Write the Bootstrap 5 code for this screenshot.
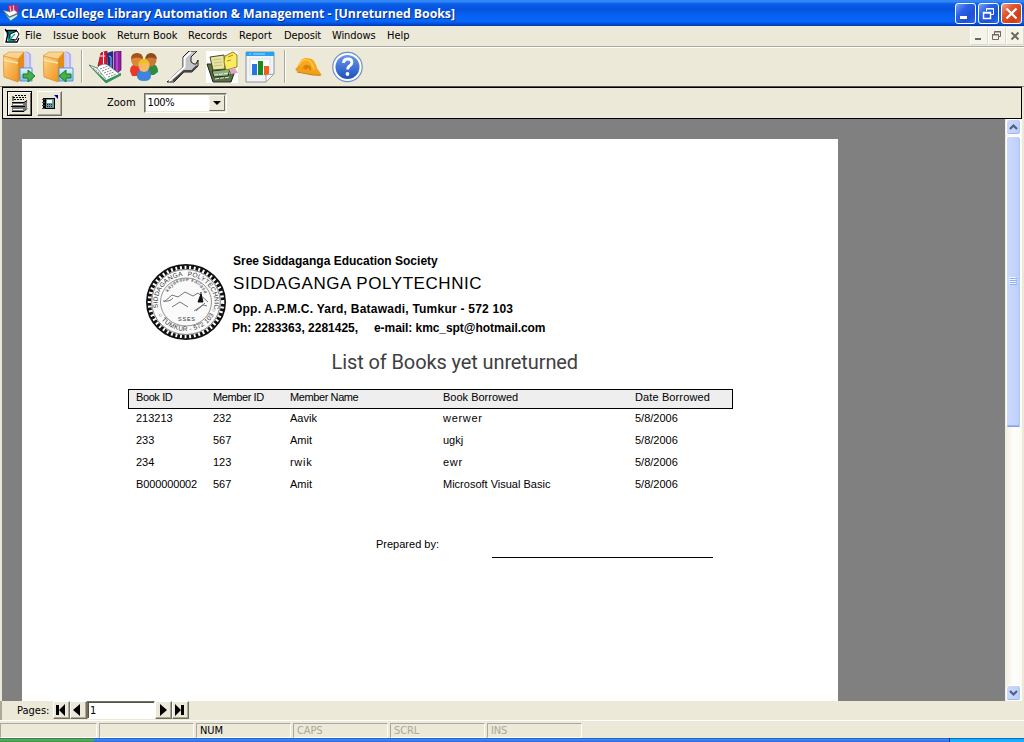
<!DOCTYPE html>
<html lang="en">
<head>
<meta charset="utf-8">
<meta name="viewport" content="width=device-width, initial-scale=1">
<title>CLAM-College Library Automation &amp; Management</title>
<link href="https://cdn.jsdelivr.net/npm/bootstrap@5.3.0/dist/css/bootstrap.min.css" rel="stylesheet">
<style>
:root{--face:#ece9d8;--shade:#aca899}
body{width:1024px;height:742px;overflow:hidden;background:var(--face);color:#000;font:11px/14px "DejaVu Sans Condensed","DejaVu Sans",sans-serif;white-space:nowrap}
body>div{flex:none}
svg{display:block;flex:none}
.titlebar{height:26px;padding:0 2px 0 3px;background:linear-gradient(#2a80f5 0,#3a8ef8 1px,#0a5ee8 4px,#0553df 9px,#0560f0 15px,#0668fc 21px,#0558e4 23px,#0136ac 26px)}
.title-text{font:bold 12.3px/16px "Open Sans",sans-serif;color:#fff;text-shadow:1px 1px 0 #0a2a80;margin:1px 0 0 2px;letter-spacing:-.03px}
.win-btns{gap:2px}
.win-btn{width:21px;height:21px;border:1px solid #fff;border-radius:3px;background:linear-gradient(135deg,#7ba2f4,#2a62e4 35%,#1c50d8 70%,#2e6cf0)}
.win-close{background:linear-gradient(135deg,#f0a088,#e2552e 35%,#d03c14 75%,#e2602f)}
.menubar{height:21px;padding-left:4px;border-bottom:1px solid var(--shade)}
.menu{grid-template-columns:28px 64px 71px 51px 45px 48px 55px 30px;margin-left:4px}
.menu a{color:#000;text-decoration:none;line-height:14px}
.tight{letter-spacing:-.1px}
.mdi-btn{width:18px;height:18px;background:#f5f4ea;border:1px solid #fff;border-right-color:#dedbca;border-bottom-color:#dedbca}
.toolbar{height:40px;border-top:1px solid #fff;border-bottom:1px solid #8c887a;padding:0 0 1px 3px}
.sep{width:2px;height:33px;border-left:1px solid var(--shade);border-right:1px solid #fff;margin:0 6px 0 5px}
.sep-wide{margin:0 9px 0 8px}
.g6{margin-left:6px}.g7{margin-left:7px}.g8{margin-left:8px}
.viewbar{height:32px;margin:0 2px;border:1px solid #000;box-shadow:0 -1px #55534a;padding-left:4px}
.tool{width:25px;height:25px;background:var(--face);border:1px solid;border-color:#fff #716f64 #716f64 #fff;box-shadow:inset -1px -1px var(--shade)}
.tool-on{border:1px solid #000;box-shadow:inset 1px 1px #fff,inset -1px -1px #716f64;margin-right:5px}
.combo{width:83px;height:20px;background:#fff;border:1px solid;border-color:#716f64 #fff #fff #716f64;box-shadow:inset 1px 1px #aca899,inset -1px -1px var(--face);padding:0 1px 0 3px;margin-left:8px}
.combo-btn{width:16px;height:16px;background:var(--face);border:1px solid;border-color:#f6f5ee #716f64 #716f64 #f6f5ee}
.desk{height:582px;background:#808080;margin:0 2px}
.report{width:816px;height:562px;margin:20px 0 0 20px;background:#fff;font-family:"Liberation Sans",Arial,sans-serif;padding:0 105px 0 106px}
.masthead{padding:115px 0 0 18px;height:204px}
.masthead b{display:block;font-size:12px;line-height:14px}
.l2{font-size:17px;line-height:20px;letter-spacing:.56px;margin-top:6px}
.l3{letter-spacing:.23px;margin-top:8px}
.l4{margin:5px 0 0 -1px}
.report-title{font:20px/24px Roboto,sans-serif;letter-spacing:-.11px;color:#404040;margin:7px 0 0 203.600px}
.grid-head{height:20px;margin-top:15px;border:1px solid #000;background:#eee;padding:0 0 5px 7px}
.line{display:grid;grid-template-columns:77px 77px 153px 192px 1fr;align-items:center}
.grid-row{height:22px;padding-left:8px;padding-bottom:4px}
.nm{letter-spacing:-.4px}.dt{letter-spacing:.12px}.bk{letter-spacing:-.13px}.wide{letter-spacing:.7px}
.sign{margin-top:38px;padding-left:248px;height:23px}
.rule{width:221px;border-bottom:1px solid #000;margin-right:20px}
.scroll{width:17px;height:582px;margin-right:-1px;padding-right:1px;background:linear-gradient(90deg,#eeeddf,#fefefb 50%,#fbfaf2)}
.desk .scroll{margin-right:0}
.sbtn,.thumb{width:15px;border:1px solid #fff;border-radius:3px;box-shadow:inset 0 -1px #9cb8f4,inset -1px 0 #b0c6f8;background:linear-gradient(90deg,#cbd9fe,#c4d3fb 65%,#b6ccfb)}
.sbtn{height:16px}.thumb{height:291px;margin-top:1px;border-bottom-color:#7f9fe0}
.pages{height:19px;border-left:2px solid var(--shade);padding-left:15px}
.pages>span:first-child{width:36px;line-height:19px}
.pbtn{width:17px;height:18px;border:1px solid;border-color:#fff #716f64 #716f64 #fff;box-shadow:inset -1px -1px var(--shade)}
.pbox{width:68px;height:18px;background:#fff;border:1px solid;border-color:#716f64 #fff #fff #716f64;box-shadow:inset 1px 1px #55534a;padding-left:2px;line-height:18px}
.status{height:18px;border-top:1px solid #fff;padding-top:2px;gap:2px;color:var(--shade)}
.pane{width:95px;height:15px;border:1px solid;border-color:var(--shade) #fff #fff var(--shade);padding-left:3px;line-height:14px;letter-spacing:-.1px}
.pane:first-child{width:97px}
.taskbar{height:4px;background:linear-gradient(#1c50c8,#3f8cf0 40%,#2a6ad8)}
.start{width:94px;background:linear-gradient(#2a6a50,#5cb05c 40%,#3c943c);border-radius:0 4px 0 0}
.tray{width:75px;background:linear-gradient(#0a4ac8,#18b0f4 40%);border-left:1px solid #0a3a80}
</style>
<script src="https://cdn.jsdelivr.net/npm/bootstrap@5.3.0/dist/js/bootstrap.bundle.min.js"></script>
</head>
<body class="d-flex flex-column m-0">

<!-- window caption -->
<div class="titlebar d-flex align-items-center">
<svg width="16" height="18" viewBox="0 0 32 36"><path d="M10 4l6-3 4 20-8-4z" fill="#e02040"/><path d="M16 3l8-2 1 20-8 2z" fill="#c8306a"/><path d="M24 3l7-1-1 18-6 3z" fill="#a03080"/><path d="M14 4l2 14M21 3v14" stroke="#fff" stroke-width="1.500"/><path d="M1 13l12 12 16-7-6-6-9 4z" fill="#fff" stroke="#888"/><path d="M1 15l12 12 16-7v4l-14 10z" fill="#d8eee0" stroke="#197050"/></svg><span class="title-text">CLAM-College Library Automation &amp; Management - [Unreturned Books]</span>
<div class="win-btns d-flex ms-auto"><span class="win-btn"><svg width="19" height="19"><path d="M4 12h7v3H4z" fill="#fff"/></svg></span><span class="win-btn"><svg width="19" height="19" fill="none" stroke="#fff"><path d="M7.500 7V4.500h7v6H12M7 5h8" /><path d="M4.500 8.500h7v6h-7zM4 9h8" stroke-width="1.500"/></svg></span><span class="win-btn win-close"><svg width="19" height="19"><path d="M4.500 4.500l10 10m0-10l-10 10" stroke="#fff" stroke-width="2.300"/></svg></span></div></div>

<!-- menu -->
<div class="menubar d-flex align-items-center">
<svg width="17" height="17" viewBox="0 0 17 17"><path d="M0 0h16v16H0z" fill="#fff"/><path d="M2 3h9v10H4z" fill="#088"/><path d="M1 2.500h12M1 1l3 4-2 9h11l2-4" fill="none" stroke="#000" stroke-width="1.300"/><path d="M6 6l7-3 2 3-3 6-6-1z" fill="#fff" stroke="#000"/><path d="M4 13L11 6" stroke="#0aa" stroke-width="1.200"/></svg><nav class="menu d-grid"><a href="#">File</a><a href="#">Issue book</a><a href="#">Return Book</a><a href="#">Records</a><a href="#">Report</a><a href="#" class="tight">Deposit</a><a href="#" class="tight">Windows</a><a href="#">Help</a></nav>
<div class="d-flex ms-auto h-100 align-items-center"><span class="mdi-btn"><svg width="16" height="16"><path d="M4 10h6v2H4z" fill="#6c6a60"/></svg></span><span class="mdi-btn"><svg width="16" height="16" fill="none" stroke="#6c6a60"><path d="M5.500 6V3.500h6v5H10M5 4h7"/><path d="M3.500 6.500h6v5h-6zM3 7h7"/></svg></span><span class="mdi-btn"><svg width="16" height="16"><path d="M4.500 4.500l7 7m0-7l-7 7" stroke="#6c6a60" stroke-width="2"/></svg></span></div></div>

<!-- icon toolbar -->
<div class="toolbar d-flex align-items-center">
<svg width="0" height="0"><defs><linearGradient id="or" x2="1" y2="1"><stop stop-color="#ffd888"/><stop offset="1" stop-color="#f0921c"/></linearGradient><linearGradient id="lv"><stop stop-color="#b4b0ec"/><stop offset="1" stop-color="#e6e4fc"/></linearGradient><linearGradient id="bl" x2="0" y2="1"><stop stop-color="#eaf6ff"/><stop offset="1" stop-color="#7cc0f4"/></linearGradient><linearGradient id="hb" x2="0" y2="1"><stop stop-color="#6a98e8"/><stop offset="1" stop-color="#1c50c0"/></linearGradient>
<g id="vol"><path d="M17 3l6-3 7 4v21l-14 5V8z" fill="url(#lv)"/><path d="M24 1l3 2v22" stroke="#9894d4" fill="none"/><path d="M0 5l6-4h15v24l-6 6L1 26z" fill="#e68a18"/><path d="M0 5l15 3v23L1 26z" fill="url(#or)" stroke="#d8983c" stroke-width=".8"/><path d="M0 5l6-4h15l-6 7z" fill="#fbd490" stroke="#d8983c" stroke-width=".6"/><path d="M1 9l14 3" stroke="#ffe6b0" stroke-width="1.500"/></g></defs></svg><svg width="33" height="32"><use href="#vol"/><path d="M17 17h12v13H17z" fill="url(#bl)" stroke="#5898d8"/><path d="M20 23h5v-4l7 6-7 6v-4h-5z" fill="#48b048" stroke="#1c7828"/></svg><svg class="g7" width="33" height="32"><use href="#vol"/><path d="M16 17h14v13H16z" fill="url(#bl)" stroke="#5898d8"/><path d="M28 23h-5v-4l-7 6 7 6v-4h5z" fill="#48b048" stroke="#1c7828"/></svg><span class="sep"></span>
<svg width="33" height="32"><path d="M12 2l6-2v20l-9-5z" fill="#e01838" stroke="#700" stroke-width=".7"/><path d="M14.500 1v15M11 5h5" stroke="#fff"/><path d="M18 2l6-2v21l-5 2z" fill="#18308c"/><path d="M20 5l2 1v12" stroke="#9ac0ff" fill="none"/><path d="M25 1l7-1v19l-7 5z" fill="#9020a8" stroke="#501060" stroke-width=".7"/><path d="M28 1v20" stroke="#d070e0"/><path d="M0 14l8 3c3-4 8-5 11-3l13 10-15 8z" fill="#fff" stroke="#406858" stroke-width=".8"/><path d="M0 14l17 15 15-7v2l-15 8z" fill="#2a9858"/><path d="M8 17l9 11" stroke="#999"/><path d="M11 18l8-3m-6 5l8-3m-6 5l8-3m-6 5l8-3m-6 5l8-3M4 17l9 7" stroke="#666" stroke-width=".8" stroke-dasharray="2 1"/></svg>
<svg class="g7" width="31" height="32"><path d="M1 20q0-7 8-7t8 7l-2 5H3z" fill="#e83828"/><path d="M16 20q0-7 7-7 6 0 6 8l-4 3h-7z" fill="#2c8c40"/><ellipse cx="8" cy="9" rx="6" ry="6.500" fill="#d88a3a"/><path d="M2 8Q2 2 8 2t6 6Q8 5 2 8z" fill="#a85018"/><ellipse cx="22" cy="9" rx="5.500" ry="6.500" fill="#c87838"/><path d="M16 8Q17 2 22 2t6 6q-6-3-12 0z" fill="#8c4c18"/><path d="M8 25q0-7 7-7t7 7q0 5-7 5t-7-5z" fill="#3c84e0"/><ellipse cx="15" cy="15" rx="5.500" ry="6" fill="#f8b868"/><path d="M9 14q1-6 6-6t6 6q-6-4-12 0z" fill="#f0c020"/></svg>
<svg class="g6" width="33" height="32"><path d="M1 31L17 16V6l6-6h8l-6 6v5l3 2h2l2-4v6l-6 6h-8L8 31z" fill="#c4c4c8" stroke="#222"/><path d="M3 30L18.500 16V7L25 1" stroke="#fff" stroke-width="2" fill="none"/><path d="M7 30l11-10h8l5-5" fill="none" stroke="#444" stroke-width="2"/></svg>
<svg class="g7" width="33" height="32"><path d="M0 0h32v32H0z" fill="#fff"/><path d="M1 13l5 0 1 8 12 1 10-2-4 11-18 0z" fill="#567048" stroke="#282818"/><path d="M6 20l18-2-2 7-14 1z" fill="#90b080" stroke="#203018"/><path d="M8 24l16-2m-15 6l15-2" stroke="#e8ecd0" stroke-dasharray="4 1"/><path d="M4 6l14-2 1 14-12 1z" fill="#e8e4a0" stroke="#484820"/><path d="M7 9l8-1M8 12l8-1M8 15l8-1" stroke="#c4c080"/><path d="M19 5l8-4 4 3v12l-11 3-2-8z" fill="#f8ec60" stroke="#908020"/><path d="M22 6l5-2M21 10l4-1" stroke="#d08020"/><path d="M23 18l6-1 3 5-7 1z" fill="#dfa8c0"/></svg>
<svg class="g6" width="31" height="32"><path d="M1 1h28v22l-8 8H1z" fill="#f0f3f8" stroke="#8c949c"/><path d="M1 1h28v4H1z" fill="#28a0f4"/><path d="M4 3h2m2 0h12" stroke="#a4dcff"/><path d="M5 8h20v16H5z" fill="#fff" stroke="#d4dce4"/><path d="M7 13h5v11H7z" fill="#2874e0"/><path d="M13 10h5v14h-5z" fill="#188c20"/><path d="M19 15h5v9h-5z" fill="#f06020"/><path d="M21 31v-7l8-1z" fill="#fff" stroke="#a0a4aa"/></svg><span class="sep sep-wide"></span>
<svg width="29" height="32"><path d="M2 20C3 11 7 7 11 7c8 0 9 4 11 10l4 6-7 1z" fill="#f8a818"/><path d="M1 17q-2 3 3 4l14 3 7 1q3-1 0-3l-2-3-5 1-14-5z" fill="#f0a01c"/><path d="M4 14q3-6 8-5M13 9q4 2 6 9" fill="none" stroke="#ffc850" stroke-width="1.500"/><path d="M8 17q1-4 5-3 4 1 3 6l-3-3-2 2z" fill="#d8800c"/><path d="M2 21l16 3h7" stroke="#c87c10" fill="none"/></svg>
<svg class="g8" width="32" height="32"><circle cx="15.500" cy="16" r="14.700" fill="#fff" stroke="#6c8ed0" stroke-width="1.200"/><circle cx="15.500" cy="16" r="12" fill="url(#hb)"/><path d="M11.500 12q.3-4 4.400-4 4 0 4 3.500 0 2-2.500 3.500-1.700 1.200-1.700 3.500" fill="none" stroke="#fff" stroke-width="2.900"/><circle cx="15.500" cy="23" r="1.900" fill="#fff"/></svg></div>

<!-- preview controls -->
<div class="viewbar d-flex align-items-center">
<span class="tool tool-on"><svg width="23" height="23"><path d="M7 3.500h11M5 5.500h13M6 7.500h10" stroke="#000" stroke-dasharray="2 1"/><path d="M4 11h12l3-3v8l-3 3H4z" fill="#777"/><path d="M5 12.500h10M5 17.500h10" stroke="#fff"/><path d="M4 10.500h12l3-2M3 14.500h14M4 19.500h12l3-3M5 4v5" stroke="#000" fill="none"/></svg></span><span class="tool"><svg width="23" height="23"><path d="M5 6h12v11H5z" fill="#000"/><path d="M8 7h8v9H8z" fill="#699"/><path d="M9 8h5v3H9z" fill="#fff"/><path d="M9 12.500h6M9 14.500h6" stroke="#222" stroke-dasharray="1 1"/><path d="M4 7.500h3M4 10.500h3M4 13.500h3M4 16.500h3" stroke="#444"/><path d="M16 3h4v4z" fill="#009"/></svg></span><span style="margin-left:45px">Zoom</span>
<div class="combo d-flex align-items-center justify-content-between"><span class="nm">100%</span><span class="combo-btn"><svg width="14" height="14"><path d="M3 5h8L7 9z"/></svg></span></div></div>

<!-- report viewport -->
<div class="desk d-flex justify-content-between">
<main class="report">
<div class="masthead d-flex">
<svg width="87" height="88" viewBox="0 0 87 88" class="mt-1"><defs><path id="up" d="M12 50a28.500 27 0 1 1 56 0"/><path id="lo" d="M9 48a31.500 30.500 0 0 0 62 0"/><path id="in" d="M20 43a20 20 0 0 1 40 0"/></defs><ellipse cx="40" cy="44" rx="37.500" ry="35.500" fill="#fff" stroke="#111" stroke-width="5"/><ellipse cx="40" cy="44" rx="36.500" ry="34.500" fill="none" stroke="#fff" stroke-width="3.600" stroke-dasharray="1.900 2.700"/><ellipse cx="40" cy="44" rx="34.300" ry="32.500" fill="#fbfbfb" stroke="#666" stroke-width=".8"/><ellipse cx="40" cy="44" rx="25.500" ry="24" fill="#fafafa" stroke="#777" stroke-width=".8"/><g font-family="Liberation Sans" fill="#333"><text font-size="6.500"><textPath href="#up" textLength="98" word-spacing="3">SIDDAGANGA POLYTECHNIC</textPath></text><text font-size="6.500"><textPath href="#lo" startOffset="9" textLength="74">○ TUMKUR - 572 103 ○</textPath></text><text font-size="5" font-style="italic"><textPath href="#in" startOffset="9" textLength="46">kayakave kailasa</textPath></text><text x="32" y="63" font-size="5.500" textLength="17">SSES</text></g><path d="M18 44l8-7 6 2 7-5 8 4 5-3 10 9M26 49l8-5 8 5M17 43q7 1 10-3M48 53l9-6 4 1M50 53l9-8" fill="none" stroke="#666" stroke-width=".9"/><path d="M55 34v10m0-8l-3 8h5z" stroke="#111" fill="#111"/></svg>
<div><b>Sree Siddaganga Education Society</b><div class="l2">SIDDAGANGA POLYTECHNIC</div><b class="l3">Opp. A.P.M.C. Yard, Batawadi, Tumkur - 572 103</b><div class="l4 d-flex"><b style="width:142px">Ph: 2283363, 2281425,</b><b style="letter-spacing:-.06px">e-mail: kmc_spt@hotmail.com</b></div></div></div>
<h1 class="report-title">List of Books yet unreturned</h1>
<div class="grid-head line"><span class="nm">Book ID</span><span class="nm">Member ID</span><span class="nm">Member Name</span><span>Book Borrowed</span><span class="dt">Date Borrowed</span></div>
<div class="grid-row line"><span>213213</span><span>232</span><span>Aavik</span><span class="wide">werwer</span><span>5/8/2006</span></div>
<div class="grid-row line"><span>233</span><span>567</span><span>Amit</span><span>ugkj</span><span>5/8/2006</span></div>
<div class="grid-row line"><span>234</span><span>123</span><span class="wide">rwik</span><span class="wide">ewr</span><span>5/8/2006</span></div>
<div class="grid-row line"><span class="bk">B000000002</span><span>567</span><span>Amit</span><span>Microsoft Visual Basic</span><span>5/8/2006</span></div>
<div class="sign d-flex justify-content-between"><span style="margin-top:2px">Prepared by:</span><span class="rule"></span></div>
</main>
<div class="scroll d-flex flex-column align-items-center"><span class="sbtn"><svg width="13" height="14"><path d="M3 9l3.500-3.500L10 9" fill="none" stroke="#4d6185" stroke-width="2.200"/></svg></span><span class="thumb d-flex align-items-center justify-content-center"><svg width="8" height="9"><path d="M0 .5h7M0 2.500h7M0 4.500h7M0 6.500h7" stroke="#eef4fe"/><path d="M1 1.500h7M1 3.500h7M1 5.500h7M1 7.500h7" stroke="#8cb0f8"/></svg></span><span class="sbtn mt-auto"><svg width="13" height="14"><path d="M3 5l3.500 3.500L10 5" fill="none" stroke="#4d6185" stroke-width="2.200"/></svg></span></div></div>

<!-- page navigator -->
<div class="pages d-flex"><span>Pages:</span><span class="pbtn"><svg width="15" height="16"><path d="M2 3h3v10H2zM11 2v12L5 8z"/></svg></span><span class="pbtn"><svg width="15" height="16"><path d="M9 2v12L2 8z"/></svg></span><span class="pbox">1</span><span class="pbtn"><svg width="15" height="16"><path d="M4 2v12l7-6z"/></svg></span><span class="pbtn"><svg width="15" height="16"><path d="M2 2v12l6-6zM8 3h3v10H8z"/></svg></span></div>
<div class="status d-flex"><span class="pane"></span><span class="pane"></span><span class="pane text-black">NUM</span><span class="pane">CAPS</span><span class="pane">SCRL</span><span class="pane">INS</span></div>
<div class="taskbar d-flex justify-content-between"><span class="start"></span><span class="tray"></span></div>
</body>
</html>
